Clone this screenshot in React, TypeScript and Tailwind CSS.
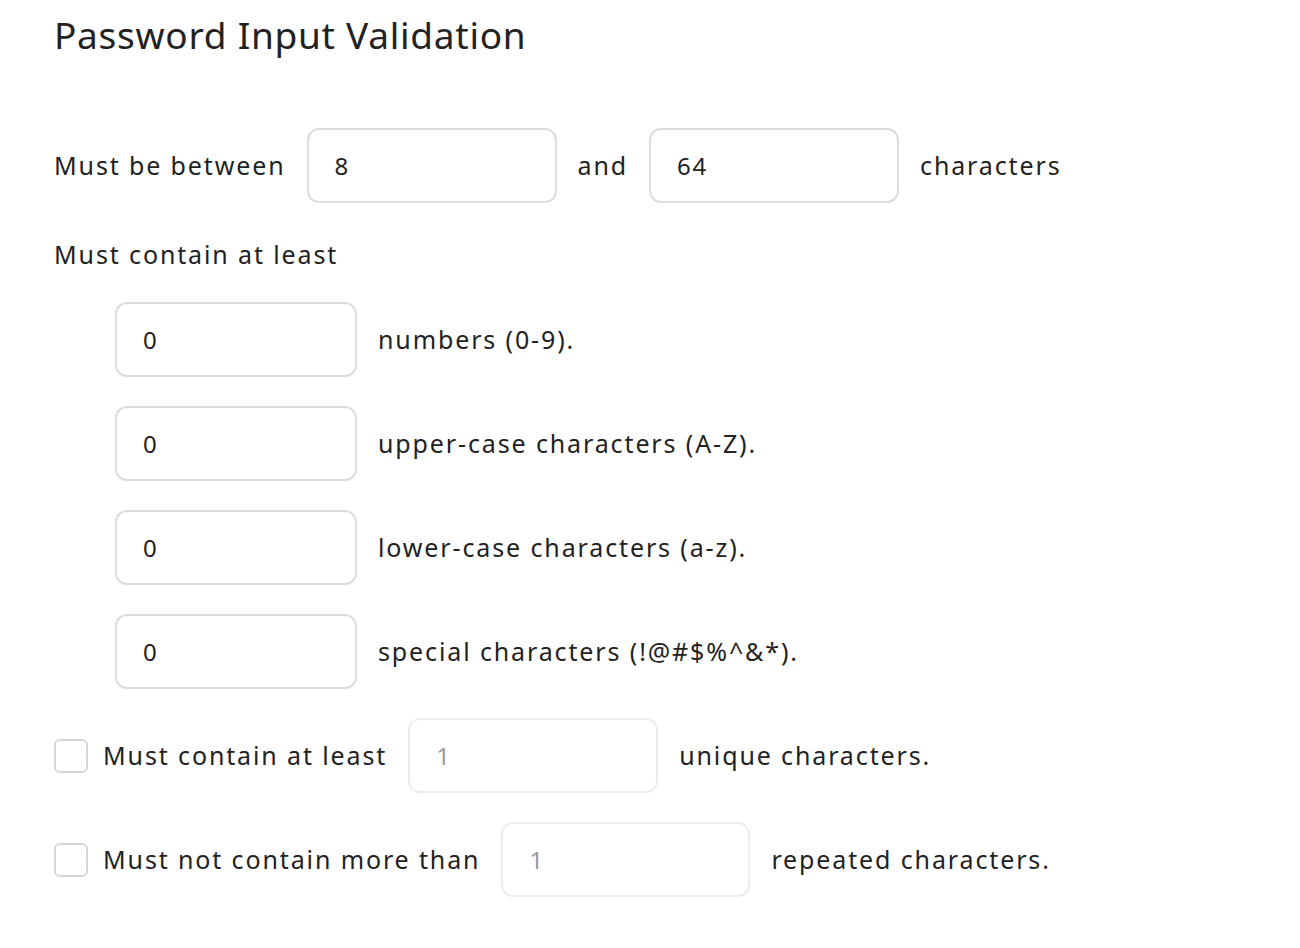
const inputBase =
  'h-[75px] rounded-[12px] border-2 px-[26px] text-[24px] outline-none bg-white'

function Field({ value, width, disabled }: { value: string; width: string; disabled?: boolean }) {
  return (
    <input
      readOnly
      value={value}
      className={`${inputBase} ${width} ${
        disabled ? 'border-[#ededed] text-[#9a9a9a]' : 'border-[#dcdcdc] text-[#222]'
      }`}
    />
  )
}

const rules = [
  'numbers (0-9).',
  'upper-case characters (A-Z).',
  'lower-case characters (a-z).',
  'special characters (!@#$%^&*).',
]

export default function App() {
  return (
    <div
      className="min-h-[948px] bg-white pl-[54px] pt-[12px] text-[25px] tracking-[0.075em] text-[#222]"
      style={{ fontFamily: '"Noto Sans", Inter, sans-serif' }}
    >
      <h1 className="text-[37px] font-normal leading-[46px] tracking-[0.02em]">Password Input Validation</h1>

      <div className="mt-[70px] flex items-center gap-[21px]">
        <span>Must be between</span>
        <Field value="8" width="w-[250px]" />
        <span>and</span>
        <Field value="64" width="w-[250px]" />
        <span>characters</span>
      </div>

      <div className="mt-[34px] leading-[34px]">Must contain at least</div>

      <div className="mt-[31px] flex flex-col gap-[29px] pl-[61px]">
        {rules.map((r) => (
          <div key={r} className="flex items-center gap-[21px]">
            <Field value="0" width="w-[242px]" />
            <span>{r}</span>
          </div>
        ))}
      </div>

      <div className="mt-[29px] flex items-center">
        <span className="h-[34px] w-[34px] rounded-[6px] border-2 border-[#d6d6d6]" />
        <span className="ml-[15px] mr-[21px]">Must contain at least</span>
        <Field value="1" width="w-[250px]" disabled />
        <span className="ml-[21px]">unique characters.</span>
      </div>

      <div className="mt-[29px] flex items-center">
        <span className="h-[34px] w-[34px] rounded-[6px] border-2 border-[#d6d6d6]" />
        <span className="ml-[15px] mr-[21px]">Must not contain more than</span>
        <Field value="1" width="w-[249px]" disabled />
        <span className="ml-[21px]">repeated characters.</span>
      </div>
    </div>
  )
}
